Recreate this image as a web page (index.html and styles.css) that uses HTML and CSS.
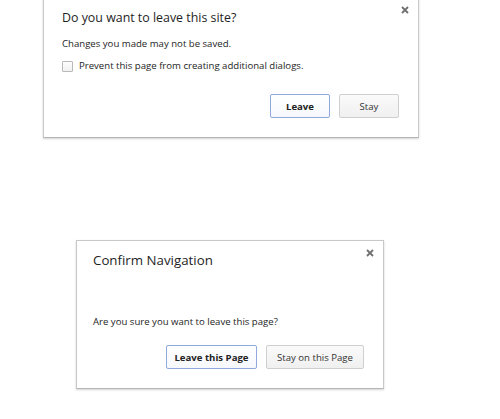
FILE: index.html
```html
<!DOCTYPE html>
<html>
<head>
<meta charset="utf-8">
<link rel="stylesheet" href="styles.css">
</head>
<body>
<div class="page">
  <div class="dialog d1">
    <button class="close" aria-label="Close"><svg width="8" height="8" viewBox="0 0 8 8"><path d="M1 1L7 7M7 1L1 7" stroke="#6f6f6f" stroke-width="1.8"/></svg></button>
    <div class="title t1">Do you want to leave this site?</div>
    <div class="msg m1">Changes you made may not be saved.</div>
    <label class="check"><span class="box"></span><span>Prevent this page from creating additional dialogs.</span></label>
    <div class="actions a1">
      <button class="btn primary b-leave">Leave</button>
      <button class="btn b-stay">Stay</button>
    </div>
  </div>

  <div class="dialog d2">
    <button class="close c2" aria-label="Close"><svg width="8" height="8" viewBox="0 0 8 8"><path d="M1 1L7 7M7 1L1 7" stroke="#6f6f6f" stroke-width="1.8"/></svg></button>
    <div class="title t2">Confirm Navigation</div>
    <div class="msg m2">Are you sure you want to leave this page?</div>
    <div class="actions a2">
      <button class="btn primary b-leave2">Leave this Page</button>
      <button class="btn b-stay2">Stay on this Page</button>
    </div>
  </div>
</div>
</body>
</html>
```

FILE: styles.css
```css
html, body {
  margin: 0;
  padding: 0;
  background: #ffffff;
}
.page {
  display: flex;
  flex-direction: column;
  align-items: flex-start;
  width: 500px;
  height: 419px;
  overflow: hidden;
  font-family: "Open Sans", "Noto Sans", sans-serif;
  color: #1e1e1e;
}
.dialog {
  position: relative;
  box-sizing: border-box;
  background: #fff;
  border: 1px solid #c8c8c8;
  border-bottom-color: #b5b5b5;
  box-shadow: 0 1px 2px rgba(0,0,0,0.18);
  display: flex;
  flex-direction: column;
}
.d1 {
  margin-left: 43px;
  margin-top: -2px;
  width: 376px;
  height: 140px;
  padding: 10px 19px 0 18px;
}
.d2 {
  margin-left: 76px;
  margin-top: 102px;
  width: 308px;
  height: 149px;
  padding: 10px 19px 0 16px;
}
.close {
  position: absolute;
  top: 7px;
  right: 9px;
  border: 0;
  background: transparent;
  padding: 0;
  width: 8px;
  height: 8px;
  display: flex;
}
.c2 {
  top: 8px;
  right: 9px;
}
.title {
  font-size: 12.4px;
  line-height: 18px;
  color: #1e1e1e;
}
.t2 {
  font-size: 13.3px;
}
.msg {
  font-size: 9.6px;
  line-height: 14px;
  color: #1e1e1e;
}
.m1 {
  margin-top: 10px;
}
.m2 {
  margin-top: 46px;
}
.check {
  display: flex;
  align-items: center;
  gap: 6px;
  margin-top: 8px;
  font-size: 9.6px;
  line-height: 14px;
  color: #1e1e1e;
}
.box {
  box-sizing: border-box;
  width: 11px;
  height: 11px;
  border: 1px solid #b9b9b9;
  border-radius: 1px;
  background: linear-gradient(#fdfdfd, #f1f1f1);
}
.actions {
  display: flex;
  justify-content: flex-end;
  gap: 9px;
}
.a1 {
  margin-top: 21px;
}
.a2 {
  margin-top: 16px;
}
.btn {
  box-sizing: border-box;
  height: 24px;
  font-family: "Open Sans", "Noto Sans", sans-serif;
  font-size: 9.6px;
  color: #333;
  background: linear-gradient(#fafafa, #f0f0f0);
  border: 1px solid #cfcfcf;
  border-radius: 2px;
  padding: 0;
}
.primary {
  border-color: #8fa9dc;
  background: linear-gradient(#ffffff, #f6f8fc);
  font-weight: 700;
  color: #222;
}
.b-leave { width: 60px; }
.b-stay { width: 60px; }
.b-leave2 { width: 91px; }
.b-stay2 { width: 98px; }
```
